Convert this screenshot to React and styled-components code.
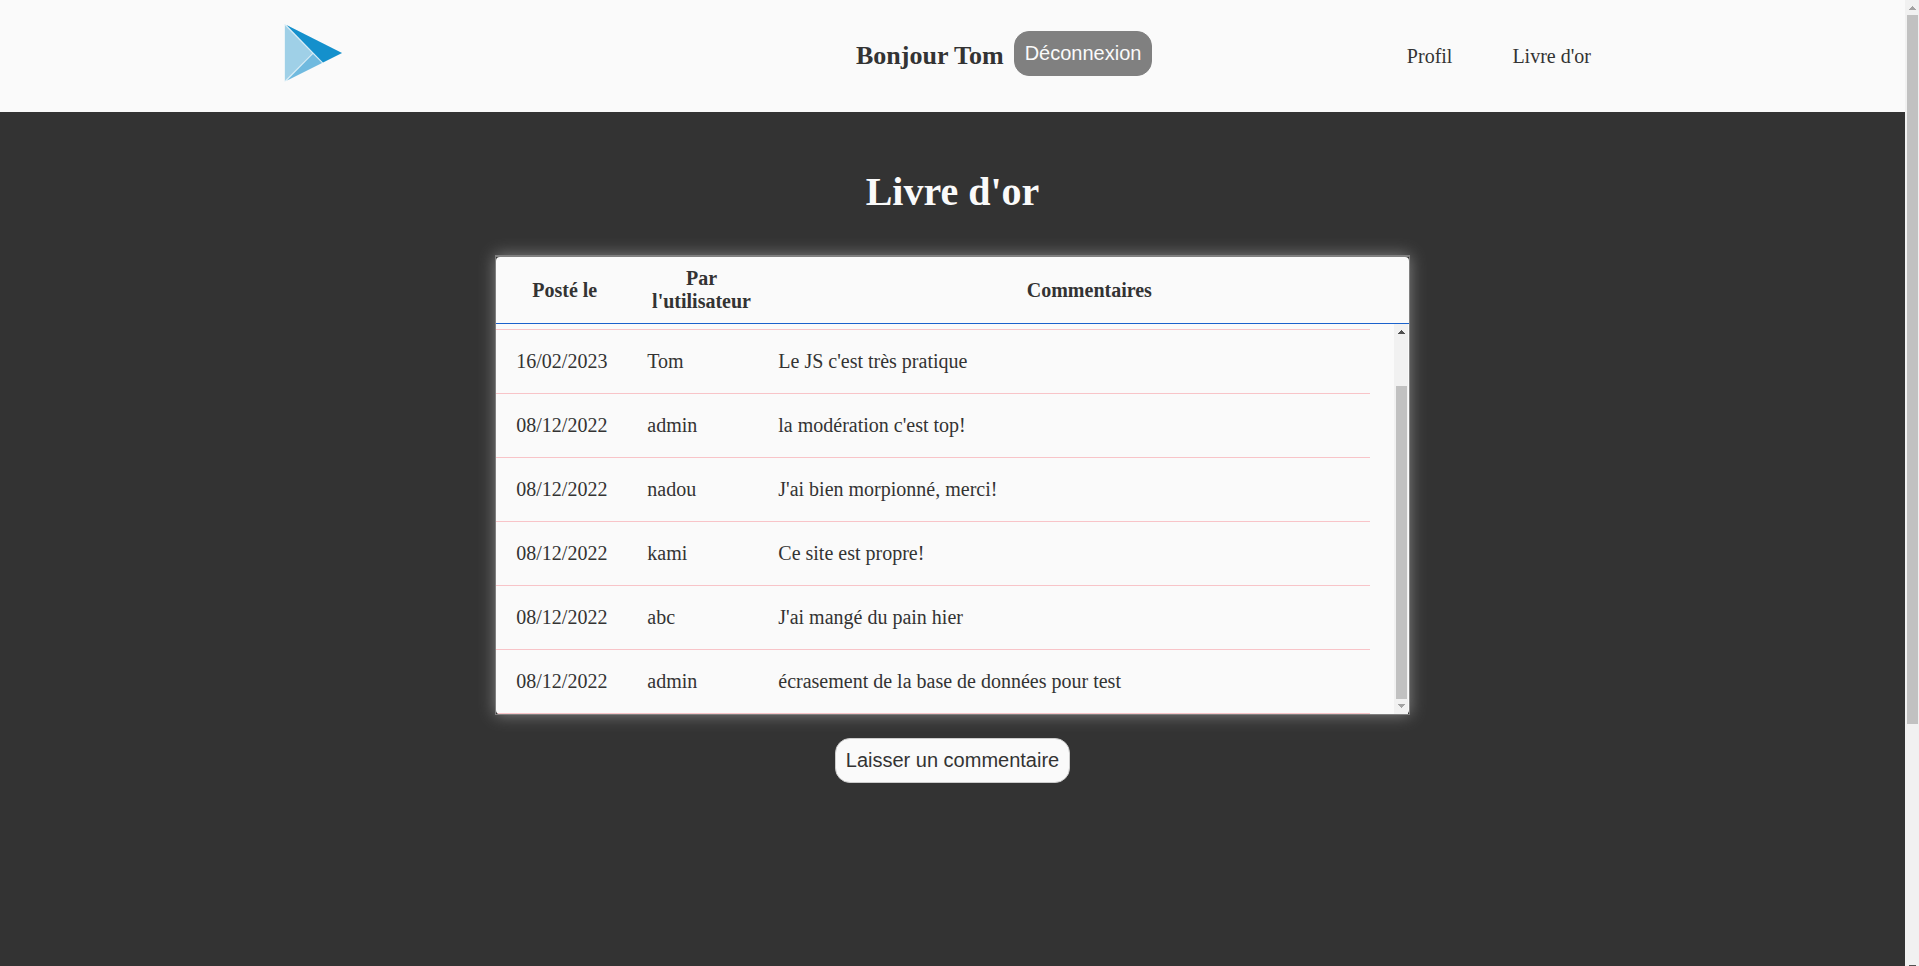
import styled, { createGlobalStyle } from "styled-components";

const GlobalStyle = createGlobalStyle`
    * {
        box-sizing: border-box;
    }

    body {
        margin: 0;
        background: #333;
        color: #333;
        font-family: "Liberation Serif", "Times New Roman", serif;
        font-size: 20px;
    }
`

const Page = styled.div`
    display: flex;
    height: 100vh;
    overflow: hidden;
`

const Content = styled.div`
    flex: 1;
    min-width: 0;
`

const Header = styled.header`
    display: flex;
    justify-content: space-between;
    align-items: center;
    padding: 24px 284px 29px;
    background: #fafafa;

    @media (max-width: 1500px) {
        padding-left: 5%;
        padding-right: 5%;
    }
`

const LogoLink = styled.a`
    flex: 0 0 26%;

    svg {
        display: block;
        width: 58px;
        height: 59px;
    }
`

const Greeting = styled.div`
    display: flex;
    align-items: center;
    gap: 10px;
`

const Welcome = styled.h2`
    margin: 0;
    padding-top: 4px;
    font-size: 26px;
    white-space: nowrap;
`

const Button = styled.button`
    padding: 10px;
    border: 1px solid ${({ $muted }) => ($muted ? "#808080" : "#ccc")};
    border-radius: 15px;
    background: ${({ $muted }) => ($muted ? "#808080" : "#fafafa")};
    color: ${({ $muted }) => ($muted ? "#fafafa" : "#333")};
    font-family: "Liberation Sans", Arial, sans-serif;
    font-size: 20px;
    line-height: 23px;
    cursor: pointer;
`

const Nav = styled.nav`
    display: flex;
    padding-top: 6px;
`

const NavLink = styled.a`
    padding: 0 30px;
    color: #333;
    text-decoration: none;
    white-space: nowrap;
`

const Main = styled.main`
    display: flex;
    flex-direction: column;
    align-items: center;
`

const Title = styled.h1`
    margin: 57px 0 40px;
    color: #fafafa;
    font-size: 40px;
    line-height: 46px;
`

const Card = styled.div`
    position: relative;
    width: 48%;
    border: 1px solid #808080;
    border-top-width: 2px;
    box-shadow: 0 0 15px #808080;
`

const Table = styled.table`
    display: block;
    overflow: hidden;
    border-radius: 4px;
    background: #fafafa;
`

const TableHead = styled.thead`
    display: table;
    width: 100%;
    table-layout: fixed;
    border-spacing: 0;
`

const HeadCell = styled.th`
    width: ${({ $width }) => $width};
    height: 67px;
    padding: 0 10px;
    border-bottom: 1px solid #1a62cc;
    line-height: 23px;
`

const TableBody = styled.tbody`
    display: block;
    padding-top: 5px;
`

const Cell = styled.td`
    width: ${({ $width }) => $width};
    height: 64px;
    padding: 0 20px;
    border-bottom: 1px solid #f8c4c8;
`

const Row = styled.tr`
    display: table;
    width: calc(100% - 39px);
    table-layout: fixed;
    border-spacing: 0;

    &:first-child ${Cell} {
        height: 65px;
        border-top: 1px solid #f8c4c8;
    }
`

const Actions = styled.div`
    padding-top: 23px;
`

const Bar = styled.div`
    display: flex;
    flex-direction: column;
    flex: 0 0 14px;
    width: 14px;
    background: #f1f1f1;
`

const PageBar = styled(Bar)`
    height: calc(100vh + 9px);
`

const TableBar = styled(Bar)`
    position: absolute;
    top: 67px;
    right: 1px;
    bottom: 0;
`

const Track = styled.div`
    flex: 1;
    display: flex;
    flex-direction: column;
    justify-content: ${({ $atEnd }) => ($atEnd ? "flex-end" : "flex-start")};
    padding: 0 1px 0 2px;
`

const Thumb = styled.div`
    height: ${({ $size }) => $size};
    background: #c1c1c1;
`

const ArrowIcon = styled.svg`
    display: block;
    flex: none;
    width: 14px;
    height: 15px;
    fill: ${({ $disabled }) => ($disabled ? "#a3a3a3" : "#505050")};
`

const columns = [
    { label: "Posté le", width: "15%" },
    { label: "Par l'utilisateur", width: "15%" },
    { label: "Commentaires", width: "70%" },
];

const comments = [
    { date: "16/02/2023", user: "Tom", text: "Le JS c'est très pratique" },
    { date: "08/12/2022", user: "admin", text: "la modération c'est top!" },
    { date: "08/12/2022", user: "nadou", text: "J'ai bien morpionné, merci!" },
    { date: "08/12/2022", user: "kami", text: "Ce site est propre!" },
    { date: "08/12/2022", user: "abc", text: "J'ai mangé du pain hier" },
    { date: "08/12/2022", user: "admin", text: "écrasement de la base de données pour test" },
];

const Logo = () => (
    <svg viewBox="0 0 58 59" aria-hidden="true">
        <path d="M0.5 0L58 29L1 57.5H0.5Z" fill="#d9edf6" />
        <path d="M1 1.5L28.3 29.2L1 56.5Z" fill="#9fd0e7" />
        <path d="M29 30L38 38.9L3 56.5Z" fill="#70badf" />
        <path d="M2.5 1L58 29.1L39 38.5Z" fill="#1490cc" />
    </svg>
);

const Arrow = ({ down, disabled }) => (
    <ArrowIcon viewBox="0 0 14 15" shapeRendering="crispEdges" $disabled={disabled}>
        <path d={down ? "M4 5h7v1h-1v1h-1v1h-1v1h-1v-1h-1v-1h-1v-1h-1z" : "M7 6h1v1h1v1h1v1h1v1h-7v-1h1v-1h1v-1h1z"} />
    </ArrowIcon>
);

const App = () => {
    return (
        <>
            <GlobalStyle />
            <Page>
                <Content>
                    <Header>
                        <LogoLink href="#" aria-label="Accueil">
                            <Logo />
                        </LogoLink>
                        <Greeting>
                            <Welcome>Bonjour Tom</Welcome>
                            <Button type="button" $muted>Déconnexion</Button>
                        </Greeting>
                        <Nav>
                            <NavLink href="#profil">Profil</NavLink>
                            <NavLink href="#livre-dor">Livre d'or</NavLink>
                        </Nav>
                    </Header>
                    <Main>
                        <Title>Livre d'or</Title>
                        <Card>
                            <Table>
                                <TableHead>
                                    <tr>
                                        {columns.map((column) => (
                                            <HeadCell key={column.label} $width={column.width} scope="col">
                                                {column.label}
                                            </HeadCell>
                                        ))}
                                    </tr>
                                </TableHead>
                                <TableBody>
                                    {comments.map((comment) => (
                                        <Row key={comment.text}>
                                            <Cell $width="15%">{comment.date}</Cell>
                                            <Cell $width="15%">{comment.user}</Cell>
                                            <Cell $width="70%">{comment.text}</Cell>
                                        </Row>
                                    ))}
                                </TableBody>
                            </Table>
                            <TableBar aria-hidden="true">
                                <Arrow />
                                <Track $atEnd>
                                    <Thumb $size="87%" />
                                </Track>
                                <Arrow down disabled />
                            </TableBar>
                        </Card>
                        <Actions>
                            <Button type="button">Laisser un commentaire</Button>
                        </Actions>
                    </Main>
                </Content>
                <PageBar aria-hidden="true">
                    <Arrow disabled />
                    <Track>
                        <Thumb $size="75%" />
                    </Track>
                    <Arrow down />
                </PageBar>
            </Page>
        </>
    );
};

export default App;
